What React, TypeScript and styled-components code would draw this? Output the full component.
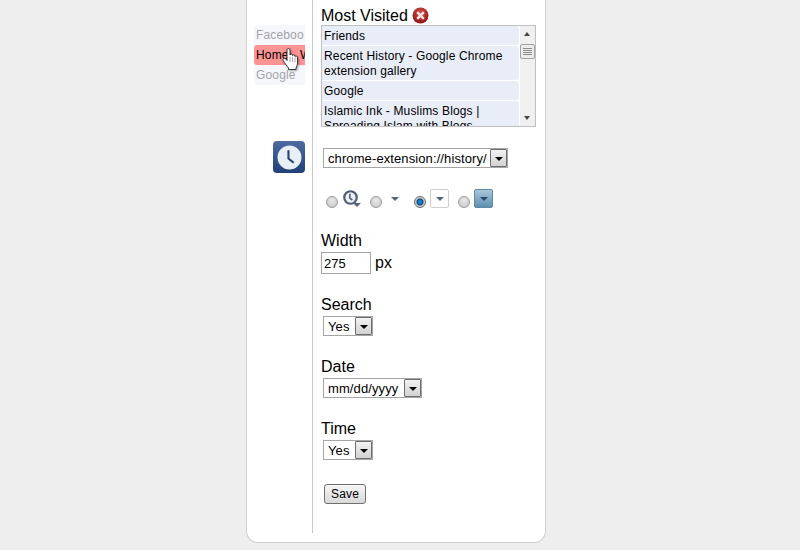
import styled, { createGlobalStyle } from 'styled-components'

const GlobalStyle = createGlobalStyle`
  html, body {
    margin: 0;
    padding: 0;
    height: 550px;
    overflow: hidden;
    background: #eeeeee;
    font-family: 'Liberation Sans', Arial, sans-serif;
    color: #000;
  }
`

const Card = styled.div`
  display: flex;
  box-sizing: border-box;
  width: 300px;
  height: 543px;
  margin-left: 246px;
  padding-bottom: 9px;
  background: #fff;
  border: 1px solid #cfcfcf;
  border-top: 0;
  border-radius: 0 0 12px 12px;
`
const Sidebar = styled.aside`
  position: relative;
  box-sizing: border-box;
  width: 66px;
  padding: 25px 7px 0 7px;
  border-right: 1px solid #c8c8c8;
`
const TabList = styled.ul`
  width: 51px;
  margin: 0;
  padding: 0;
  list-style: none;
  background: #f5f7fc;
  border-radius: 3px 0 0 3px;
`
const Tab = styled.li<{ $active?: boolean }>`
  box-sizing: border-box;
  height: 20px;
  padding-left: 2px;
  overflow: hidden;
  font-size: 12px;
  line-height: 20px;
  letter-spacing: 0.15px;
  word-spacing: 8px;
  color: ${p => (p.$active ? '#000' : '#a3a3a8')};
  background: ${p => (p.$active ? '#fc9494' : 'transparent')};
  border-radius: ${p => (p.$active ? '3px 0 0 3px' : '0')};
`
const TabLabel = styled.span<{ $active?: boolean }>`
  display: block;
  width: ${p => (p.$active ? 49 : 48)}px;
  overflow: hidden;
  white-space: nowrap;
`
const HandCursor = styled.svg`
  position: absolute;
  left: 35px;
  top: 48px;
  filter: drop-shadow(1px 1px 1px rgba(0, 0, 0, 0.35));
`
const ClockTile = styled.div`
  display: flex;
  align-items: center;
  justify-content: center;
  width: 32px;
  height: 32px;
  margin: 56px 0 0 19px;
  border-radius: 4px;
  background: linear-gradient(#4d6b9f, #223f7a);
`
const Main = styled.main`
  flex: 1;
  padding: 6px 0 0 8px;
`
const Heading = styled.div`
  display: flex;
  align-items: center;
  gap: 4px;
  height: 19px;
  font-size: 16px;
  line-height: 19px;
`
const ListBox = styled.div`
  display: flex;
  box-sizing: border-box;
  width: 215px;
  height: 102px;
  overflow: hidden;
  border: 1px solid #c0c0c0;
`
const ListItems = styled.div`
  display: flex;
  flex-direction: column;
  gap: 1px;
  width: 197px;
  flex: none;
`
const ListItem = styled.div`
  flex: none;
  padding: 3px 2px 1px 2px;
  font-size: 12px;
  line-height: 15px;
  letter-spacing: 0.15px;
  background: #e9edf8;
  border-radius: 0 3px 3px 0;
`
const Scrollbar = styled.div`
  position: relative;
  flex: 1;
  margin-left: 1px;
  background: #f0f0f0;
`
const ScrollThumb = styled.div`
  position: absolute;
  left: 0;
  top: 18px;
  box-sizing: border-box;
  display: flex;
  flex-direction: column;
  align-items: center;
  justify-content: center;
  gap: 1px;
  width: 15px;
  height: 15px;
  background: #ececec;
  border: 1px solid #a2a2a2;
  border-radius: 2px;

  i {
    display: block;
    width: 9px;
    height: 1px;
    background: #8a8a8a;
  }
`
const ScrollArrow = styled.div<{ $down?: boolean }>`
  position: absolute;
  left: 4px;
  ${p => (p.$down ? 'bottom: 6px;' : 'top: 6px;')}
  width: 0;
  height: 0;
  border-left: 3.5px solid transparent;
  border-right: 3.5px solid transparent;
  ${p => (p.$down ? 'border-top: 4px solid #444;' : 'border-bottom: 4px solid #444;')}
`
const Select = styled.div<{ $top: number; $width: number }>`
  display: flex;
  align-items: center;
  justify-content: space-between;
  box-sizing: border-box;
  width: ${p => p.$width}px;
  height: 20px;
  margin: ${p => p.$top}px 0 0 2px;
  padding-left: 4px;
  font-size: 13px;
  letter-spacing: 0.1px;
  background: #fff;
  border: 1px solid #a5a5a5;
`
const SelectButton = styled.span`
  display: flex;
  align-items: center;
  justify-content: center;
  flex: none;
  box-sizing: border-box;
  width: 17px;
  height: 18px;
  background: linear-gradient(#f2f2f2, #d2d2d2);
  border: 1px solid #6f6f6f;
  border-radius: 1px;

  &::after {
    content: '';
    width: 0;
    height: 0;
    margin-top: 1px;
    border-left: 4px solid transparent;
    border-right: 4px solid transparent;
    border-top: 4px solid #000;
  }
`
const RadioRow = styled.div`
  display: flex;
  align-items: flex-start;
  height: 28px;
  margin: 22px 0 0 5px;
`
const RadioOption = styled.div<{ $width: number }>`
  display: flex;
  align-items: flex-start;
  width: ${p => p.$width}px;
`
const Radio = styled.span<{ $checked?: boolean }>`
  flex: none;
  box-sizing: border-box;
  width: 12px;
  height: 12px;
  margin-top: 6px;
  border-radius: 50%;
  border: 1px solid ${p => (p.$checked ? '#6b6b6b' : '#9a9a9a')};
  background: ${p =>
    p.$checked
      ? 'radial-gradient(circle, #1a7cc4 0 2px, #0c3f66 3px, #c9ced2 4px)'
      : 'radial-gradient(circle at 50% 35%, #e8e8e8, #c4c4c4)'};
`
const Arrow = styled.span<{ $tone: string }>`
  display: block;
  width: 0;
  height: 0;
  border-left: 4px solid transparent;
  border-right: 4px solid transparent;
  border-top: 4px solid ${p => p.$tone};
`
const PlainArrow = styled.div`
  margin: 7px 0 0 9px;
`
const BoxedArrow = styled.div<{ $filled?: boolean }>`
  display: flex;
  align-items: center;
  justify-content: center;
  box-sizing: border-box;
  width: 19px;
  height: 19px;
  margin: -1px 0 0 4px;
  border-radius: 2px;
  border: 1px solid ${p => (p.$filled ? '#5f89a8' : '#cfcfcf')};
  background: ${p => (p.$filled ? 'linear-gradient(#a9c6da, #5f8fb0)' : '#fff')};
`
const ClockArrow = styled.div`
  position: relative;
  width: 22px;
  height: 20px;
  margin-left: 5px;
`
const ClockBadge = styled.svg`
  display: block;
`
const CornerArrow = styled.div`
  position: absolute;
  left: 10px;
  top: 13px;
`
const FieldLabel = styled.div<{ $top: number }>`
  margin-top: ${p => p.$top}px;
  font-size: 16px;
  line-height: 19px;
  height: 18px;
`
const WidthRow = styled.div`
  display: flex;
  align-items: center;
  gap: 4px;
  margin-top: 3px;
  font-size: 16px;
`
const NumberInput = styled.input`
  box-sizing: border-box;
  width: 50px;
  height: 22px;
  padding: 0 2px;
  font: 13px 'Liberation Sans', Arial, sans-serif;
  border: 1px solid #a5a5a5;
  border-radius: 0;
  outline: none;
`
const SaveButton = styled.button`
  display: block;
  box-sizing: border-box;
  width: 42px;
  height: 20px;
  margin: 24px 0 0 3px;
  padding: 0;
  font: 12px 'Liberation Sans', Arial, sans-serif;
  letter-spacing: 0.2px;
  color: #000;
  background: linear-gradient(#f6f6f6, #d9d9d9);
  border: 1px solid #707070;
  border-radius: 3px;
`

const ClockGlyph = ({ size }: { size: number }) => (
  <svg width={size} height={size} viewBox="0 0 24 24">
    <circle cx="12" cy="12" r="11.5" fill="#e9eff7" />
    <path d="M11 5v8l5 4" fill="none" stroke="#27406f" strokeWidth="2" />
  </svg>
)

const options = [
  ['Friends'],
  ['Recent History - Google Chrome', 'extension gallery'],
  ['Google'],
  ['Islamic Ink - Muslims Blogs |', 'Spreading Islam with Blogs'],
]

export default function App() {
  return (
    <>
      <GlobalStyle />
      <Card>
        <Sidebar>
          <TabList>
            <Tab>
              <TabLabel>Facebook</TabLabel>
            </Tab>
            <Tab $active>
              <TabLabel $active>Home Work</TabLabel>
            </Tab>
            <Tab>
              <TabLabel>Google</TabLabel>
            </Tab>
          </TabList>
          <HandCursor width="17" height="23" viewBox="0 0 17 23">
            <path
              d="M5 2C5 0 8 0 8 2V7C8.500 5.500 10.500 5.500 10.500 7.500C11 6.500 13 6.500 13 8.500C13.500 7.500 15.500 8 15.500 10V15C15.500 17 14.500 18.500 14 20V21.500H6.500V20C5 18 3 15.500 1.200 12.500C.3 10.500 2.500 9.500 3.800 11L5 12.500Z"
              fill="#fff"
              stroke="#222"
              strokeWidth="0.9"
            />
            <path d="M8 9v5M10.500 9v5M13 9.500v5" stroke="#888" strokeWidth="0.7" />
          </HandCursor>
          <ClockTile>
            <ClockGlyph size={25} />
          </ClockTile>
        </Sidebar>
        <Main>
          <Heading>
            Most Visited
            <svg width="17" height="17" viewBox="0 0 17 17">
              <defs>
                <radialGradient id="closeFill" cx="50%" cy="35%" r="65%">
                  <stop offset="0%" stopColor="#d9534f" />
                  <stop offset="100%" stopColor="#8c1414" />
                </radialGradient>
              </defs>
              <circle cx="8.500" cy="8.500" r="8" fill="url(#closeFill)" />
              <path d="M5.200 5.200l6.600 6.600M11.800 5.200l-6.600 6.600" stroke="#f2e6e6" strokeWidth="2.400" />
            </svg>
          </Heading>
          <ListBox>
            <ListItems>
              {options.map(lines => (
                <ListItem key={lines[0]}>
                  {lines.map(line => (
                    <div key={line}>{line}</div>
                  ))}
                </ListItem>
              ))}
            </ListItems>
            <Scrollbar>
              <ScrollArrow />
              <ScrollThumb>
                <i />
                <i />
                <i />
                <i />
              </ScrollThumb>
              <ScrollArrow $down />
            </Scrollbar>
          </ListBox>
          <Select $top={21} $width={185}>
            chrome-extension://history/
            <SelectButton />
          </Select>
          <RadioRow>
            <RadioOption $width={44}>
              <Radio />
              <ClockArrow>
                <ClockBadge width="15" height="15" viewBox="0 0 24 24">
                  <circle cx="12" cy="12" r="10" fill="#eef0f4" stroke="#4d5a78" strokeWidth="3.500" />
                  <path d="M11 6v7l4 3" fill="none" stroke="#4d5a78" strokeWidth="2.500" />
                </ClockBadge>
                <CornerArrow>
                  <Arrow $tone="#566280" />
                </CornerArrow>
              </ClockArrow>
            </RadioOption>
            <RadioOption $width={44}>
              <Radio />
              <PlainArrow>
                <Arrow $tone="#566280" />
              </PlainArrow>
            </RadioOption>
            <RadioOption $width={44}>
              <Radio $checked />
              <BoxedArrow>
                <Arrow $tone="#566280" />
              </BoxedArrow>
            </RadioOption>
            <RadioOption $width={44}>
              <Radio />
              <BoxedArrow $filled>
                <Arrow $tone="#2a4668" />
              </BoxedArrow>
            </RadioOption>
          </RadioRow>
          <FieldLabel $top={13}>Width</FieldLabel>
          <WidthRow>
            <NumberInput defaultValue="275" />
            px
          </WidthRow>
          <FieldLabel $top={21}>Search</FieldLabel>
          <Select $top={3} $width={50}>
            Yes
            <SelectButton />
          </Select>
          <FieldLabel $top={21}>Date</FieldLabel>
          <Select $top={3} $width={99}>
            mm/dd/yyyy
            <SelectButton />
          </Select>
          <FieldLabel $top={21}>Time</FieldLabel>
          <Select $top={3} $width={50}>
            Yes
            <SelectButton />
          </Select>
          <SaveButton>Save</SaveButton>
        </Main>
      </Card>
    </>
  )
}
